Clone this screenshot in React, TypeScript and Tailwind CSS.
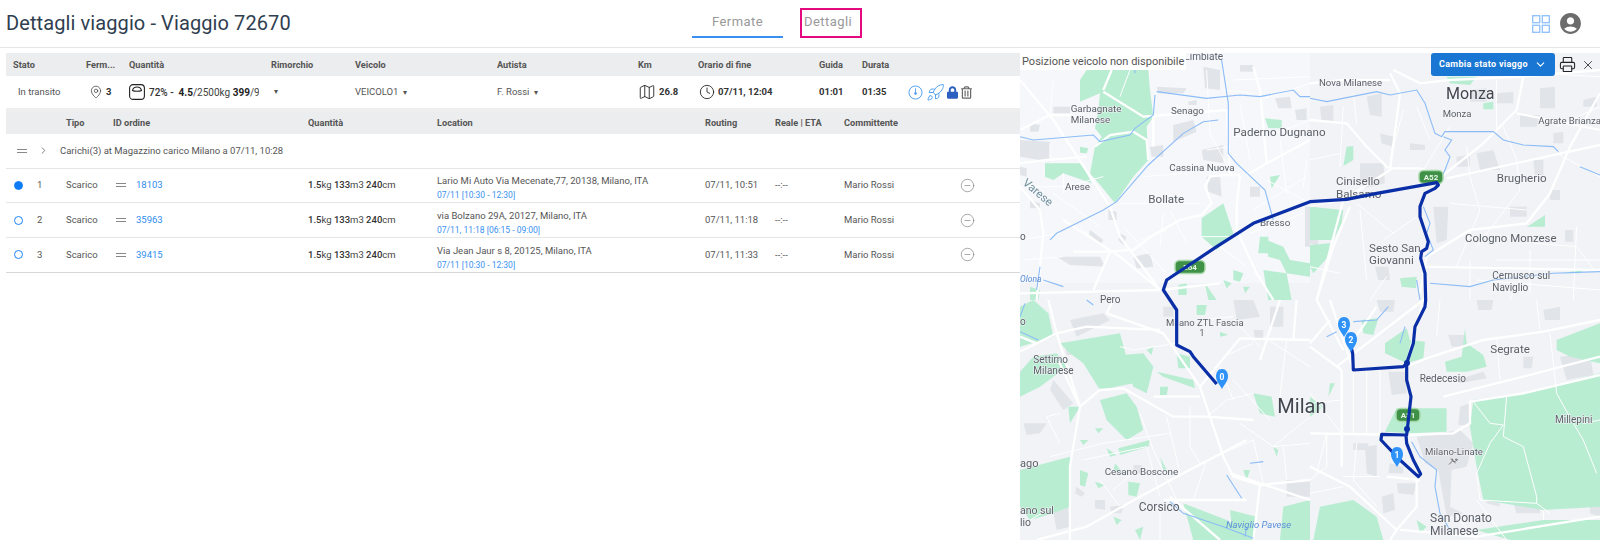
import React from "react";
import { MapPin, Map as MapIcon, Clock, Rocket, CircleMinus, Printer, X, ChevronDown, ChevronRight } from "lucide-react";
import { FaLock, FaRegTrashAlt } from "react-icons/fa";
import { MdAccountCircle } from "react-icons/md";

type Quad = { x: number; y: number; greens: string[]; blocks: string[]; major: string[]; minor: string[]; water: string[]; labels: [string, number, number, number][] };

const quads: Quad[] = [
  {
    x: 1020, y: 60,
    greens: [
      "180,60 200,30 385,30 390,90 400,170 380,200 385,300 340,350 285,430 245,380 210,340 225,260 245,230 225,205 235,150 240,100 180,125",
      "75,310 180,310 200,340 215,370 130,340 100,360 75,350", "545,475 610,430 640,520 590,570 545,530", "735,175 785,180 785,205 745,205",
      "720,530 745,530 745,580 715,580", "740,540 790,560 810,600 870,610 870,650 800,640 780,600 745,590", "730,630 800,640 815,720 745,720",
      "640,630 670,640 660,665 640,660", "475,675 500,670 500,705 475,705", "610,660 635,670 620,685", "670,680 690,680 675,700", "555,670 590,720 565,720",
      "180,260 205,265 200,280 180,278", "30,680 60,690 55,720 30,720", "750,350 780,345 755,385",
    ],
    blocks: [
      "0,240 90,245 90,305 0,290", "550,20 600,30 600,90 555,85", "765,115 810,110 815,145 775,145", "545,270 610,255 610,310 550,300", "460,195 520,180 530,215 460,245",
      "560,350 600,345 605,410 565,395", "390,260 430,255 430,290 395,290", "100,140 150,140 150,160 100,160", "825,150 860,145 860,180 830,180", "855,440 870,440 870,560 855,560",
      "110,590 240,590 255,620 150,615", "210,510 250,540 240,555 205,530", "300,520 320,530 310,555 295,540", "0,320 20,325 20,350 0,345", "265,450 290,455 290,480 265,480",
      "410,80 500,85 490,100 415,100", "505,125 530,120 530,135 505,135", "30,190 60,195 55,215 30,215", "30,420 60,430 60,445 30,445", "270,345 290,345 290,365 270,365", "290,180 315,180 315,200 290,200",
      "660,15 700,15 700,35 660,35", "690,380 720,380 720,410 690,410", "340,590 390,580 400,620 350,625",
    ],
    major: [
      "0,60 100,180 270,440 300,530 420,690", "60,450 70,520 50,720", "0,310 80,300 200,290", "0,210 90,165 160,165", "250,95 370,170 620,150", "400,170 400,260", "250,90 275,30",
      "225,260 270,225 340,215 380,240 385,300", "680,345 740,310 870,240", "660,345 610,345 570,350 555,380 575,430 545,465 480,480 400,525 340,570 260,575 160,575",
      "660,345 650,440 650,510 710,640 760,720", "700,20 720,90 740,310", "620,150 630,345", "0,700 420,690 600,670", "270,575 220,690", "130,480 300,590 420,690", "60,450 0,380",
    ],
    minor: [
      "0,380 140,380 250,350", "90,250 90,300", "130,340 130,400", "300,430 540,430", "370,350 500,340", "430,460 420,560", "560,30 570,220 640,350", "720,120 870,70", "640,60 870,50", "610,90 700,100",
      "770,220 870,180", "740,360 870,430", "860,300 850,380", "700,450 860,350", "330,30 300,110", "100,60 90,160", "690,520 850,460", "540,530 640,530", "310,500 440,640", "180,500 260,570",
      "450,450 500,550", "600,560 680,620", "360,540 440,510", "560,270 630,260", "100,400 240,500", "0,540 120,520", "10,600 130,590", "640,230 740,220", "660,130 690,300", "780,240 800,400",
    ],
    water: [
      "410,95 560,115 660,105 720,110 820,90 840,110 870,110", "0,230 40,240 220,225 240,245 330,225 345,205 400,165 405,105", "90,540 110,520 250,450 290,425 385,315 490,220 550,185 595,180",
      "605,0 625,130 625,280 650,310 735,390 760,480", "60,620 50,690", "70,660 130,680", "345,30 345,40",
    ],
    labels: [
      ["Garbagnate", 152, 155, 9.8], ["Milanese", 152, 190, 9.8], ["Senago", 453, 163, 9.8], ["Paderno Dugnano", 640, 228, 11.6], ["Cassina Nuova", 448, 332, 9.8],
      ["Arese", 135, 389, 9.8], ["Bollate", 385, 430, 11.6], ["Bresso", 720, 497, 9.8], ["o", 0, 540, 10],
    ],
  },
  {
    x: 1310, y: 60,
    greens: [
      "410,50 500,50 480,75 420,70", "520,130 550,125 550,148 520,148", "110,260 130,258 130,300 100,318", "0,440 100,450 95,490 70,540 0,540", "0,555 60,550 55,590 10,640 0,620",
      "270,655 320,650 318,685 275,680", "660,495 705,465 705,500 650,500", "760,640 830,625 810,640",
    ],
    blocks: [
      "690,85 735,80 735,145 690,145", "630,165 690,165 680,200 630,200", "170,110 215,100 215,170 180,165", "30,140 70,135 70,185 35,185", "150,310 220,310 225,370 160,385 150,360",
      "0,440 20,440 25,560 0,550", "500,280 550,270 570,330 510,330", "370,440 415,440 410,540 380,550", "440,290 480,285 480,320 440,320", "670,300 700,300 700,345 675,345", "720,390 750,390 750,420 720,420",
      "765,510 790,510 790,545 765,545", "195,620 235,620 240,660 205,660", "210,220 250,230 250,260 215,250", "600,440 650,440 650,470 600,470", "820,120 860,110 860,140 820,140", "300,250 345,255 345,270 300,270",
      "730,220 760,215 760,250 730,250", "560,100 610,95 610,130 560,130", "480,90 530,85 530,125 480,125",
    ],
    major: [
      "410,355 870,255", "240,40 270,100 240,330 100,420 20,720", "240,325 330,325 400,345", "400,345 520,250 620,150 640,50", "620,160 870,210", "250,30 330,70 420,60 630,50 870,30", "0,180 110,190 170,260 235,325",
      "0,70 100,60 240,60", "870,100 780,260 720,400 650,490 480,510 350,590 330,700", "120,440 70,560 20,720", "330,620 870,630",
    ],
    minor: [
      "420,200 340,330", "470,260 480,350 510,450 440,620", "580,200 620,300 630,390 500,560", "0,440 110,420", "140,430 250,520", "420,430 650,450", "220,540 320,470", "670,550 800,560 860,640", "480,600 480,720",
      "100,140 90,320", "680,40 870,50", "740,280 870,350", "800,500 790,720", "230,650 180,720", "870,140 740,200", "560,600 870,600", "600,720 640,640", "280,150 240,300", "560,60 560,210", "0,300 90,280", "130,100 140,190",
      "320,140 360,240", "660,570 660,700", "500,660 870,690", "0,620 90,640", "150,450 170,660",
    ],
    water: [
      "0,115 50,125 200,95 240,105 320,90 345,130 375,220 395,230 405,215 550,215 580,240 640,255 730,260 745,275", "400,230 425,240 405,270 420,290 405,330 395,350", "810,320 870,345",
      "340,440 360,490 350,520 370,570 345,590", "360,670 480,680 550,660 730,640 870,635", "320,660 330,720",
    ],
    labels: [
      ["Nova Milanese", 27, 78, 9.6], ["Monza", 408, 118, 16], ["Monza", 398, 172, 9.5], ["Agrate Brianza", 685, 192, 9.6], ["Cinisello", 78, 375, 11.6], ["Balsamo", 78, 413, 11.6], ["Brugherio", 560, 367, 11.6],
      ["Cologno Monzese", 465, 545, 11.4], ["Sesto San", 177, 575, 11.6], ["Giovanni", 177, 612, 11.6], ["Cernusco sul", 547, 657, 10], ["Naviglio", 547, 692, 10],
    ],
  },
  {
    x: 1020, y: 300,
    greens: [
      "0,20 40,0 85,40 100,110 0,140", "120,130 300,100 340,250 240,270 190,190 150,160", "305,165 370,160 400,200 380,280 340,260", "410,215 520,240 525,265 430,230", "470,160 510,170 510,205 475,205", "530,15 560,15 555,45 530,45",
      "240,300 320,280 350,320 370,390 320,420 260,360", "0,215 40,170 110,160 140,200 60,260 0,290", "145,320 180,320 150,370", "0,510 150,470 150,620 100,640 30,660 0,620", "180,510 205,520 195,560 180,555",
      "225,545 255,555 235,565", "295,445 390,420 385,440 300,465", "260,445 290,465 270,470", "420,470 445,520 430,510", "325,545 360,550 350,590 325,585", "285,490 310,520 280,515", "490,610 620,660 700,720 520,720",
      "790,620 870,600 870,720 780,720", "700,280 755,290 765,350 720,340", "630,630 710,650 700,720 640,720", "380,150 400,140 395,165", "420,260 445,260 440,285 420,285", "345,690 370,680 360,720", "280,650 305,660 290,675",
      "670,510 690,510 680,540", "760,440 775,450 770,470", "600,95 625,105 600,110", "225,385 250,385 235,400", "180,420 205,420 190,435",
    ],
    blocks: [
      "10,370 80,370 60,400 20,405", "150,60 250,40 270,60 170,110", "135,140 180,150 180,165 140,165", "100,240 160,310 130,330 90,270", "640,0 700,0 720,50 650,60", "700,90 730,90 730,115 705,115", "800,540 870,540 870,590 800,590",
      "430,20 460,20 460,50 430,50", "170,560 195,580 185,590 165,580", "225,600 255,600 255,630 225,625", "0,560 25,590 20,620 0,610", "100,640 145,620 150,680 110,690", "340,495 365,495 365,520 340,520", "270,620 310,615 305,640 275,640",
      "840,610 870,620 870,650 840,655", "750,20 790,20 790,80 750,80",
    ],
    major: [
      "0,155 110,100 200,80 420,90", "85,0 110,100 180,320 150,500 150,720", "110,170 180,320", "180,320 240,270 310,265 460,350 560,350 700,360", "260,40 430,100 540,260 610,470 640,530 720,555 870,540", "540,260 660,115 870,120", "0,110 50,130",
      "280,0 260,40", "50,720 200,680 360,590 490,520 680,420", "400,290 540,290", "630,520 870,600", "720,555 700,720", "430,600 680,600", "450,590 600,720", "780,0 720,180", "830,0 820,120",
    ],
    minor: [
      "300,140 340,150 470,130", "120,340 80,350 120,430", "360,340 400,450 480,620", "440,350 480,520", "510,320 510,440 540,490", "560,350 620,300 700,280", "660,370 760,440 870,350", "700,420 730,550", "790,440 800,540", "250,430 450,400",
      "190,480 380,440 420,590", "90,470 250,430", "540,490 700,420", "280,570 340,520", "30,660 100,620", "560,480 520,600", "640,240 750,360", "730,110 870,200", "800,120 780,290", "420,620 420,720", "870,430 760,440", "240,540 300,620", "610,170 700,130",
      "600,200 640,300", "540,60 640,50", "640,60 720,140",
    ],
    water: ["620,525 665,595", "450,605 490,640 610,680 700,715", "690,490 730,485", "0,95 55,120", "15,10 0,50", "200,0 220,15", "680,680 675,710"],
    labels: [
      ["Pero", 240, 8, 10], ["Milano ZTL Fascia", 438, 78, 9.5], ["1", 538, 108, 9.5], ["Settimo", 40, 190, 10], ["Milanese", 40, 222, 10], ["ago", 0, 500, 11], ["Cesano Boscone", 254, 526, 9.8], ["Corsico", 356, 634, 12],
      ["ano sul", 0, 643, 10.5], ["lio", 0, 677, 10.5], ["Milan", 772, 338, 20], ["o", 0, 75, 10],
    ],
  },
  {
    x: 1310, y: 300,
    greens: [
      "155,60 205,55 190,105 160,100", "225,130 290,85 300,120 345,125 340,175 290,190 225,160", "405,185 455,170 465,85 470,130 520,165 530,200 470,215 410,215", "260,325 410,325 410,395 300,400 225,395",
      "490,300 640,280 870,220 870,620 700,630 520,600 500,500 480,380", "740,120 870,70 870,190 780,170 740,150", "30,620 130,600 200,650 220,720 10,720", "500,690 700,660 870,660 870,720 600,720", "320,660 350,680 330,700", "60,250 75,250 55,290",
      "0,290 40,320 0,350",
    ],
    blocks: [
      "320,410 450,390 490,430 470,500 425,510 420,620 460,640 410,650 385,510 345,490", "415,105 465,105 460,140 425,140", "235,215 285,215 290,280 245,285", "500,0 550,0 545,30 505,30", "200,0 255,0 250,35 210,35", "750,170 840,160 850,225 770,240",
      "640,170 670,170 665,205 640,205", "165,440 200,435 200,530 170,520", "130,430 175,430 175,450 130,450", "240,490 280,500 280,520 235,520", "215,590 250,580 255,630 220,640", "260,550 320,550 310,585 265,580", "450,320 480,310 480,375 445,375",
      "700,30 750,20 750,60 705,60", "440,240 520,215 530,235 450,250", "610,380 650,375 680,440 650,460 620,420", "640,310 670,310 660,340 645,345", "815,440 845,440 845,470 825,475", "840,590 870,580 870,650 840,640", "530,510 560,520 570,620 530,610", "610,610 690,605 690,640 620,640",
    ],
    major: [
      "130,210 290,200 350,175 520,120 700,95 870,60", "95,210 95,500", "0,400 290,405 430,400 480,370 480,305 640,280 870,225", "400,290 640,230 870,170", "320,530 320,620 260,690 240,720", "0,140 95,210", "0,500 120,560 260,690",
      "340,0 290,190", "0,130 60,60", "340,0 80,200", "20,0 100,150", "230,530 330,540", "270,690 500,710 870,650", "60,0 80,60 130,210", "200,20 130,120",
    ],
    minor: [
      "540,370 580,375 540,430 500,520 510,600 680,610 720,640", "580,410 640,440 680,590 680,610", "740,280 790,370 820,420 860,520", "490,305 540,370", "590,290 580,410", "820,370 870,360", "130,210 130,400", "170,210 170,400", "210,210 210,400",
      "95,300 0,310", "95,400 0,280", "50,400 20,520", "50,400 50,500 0,540", "140,430 130,540 200,620", "100,530 210,530", "0,580 100,560", "700,630 700,660", "390,0 380,110", "560,110 570,240", "720,100 740,280", "500,600 590,720", "440,650 500,720", "680,0 690,90",
    ],
    water: ["305,425 330,470 380,510 375,560 390,640 420,690", "50,110 80,95", "130,65 200,60 235,20", "270,130 285,80"],
    labels: [["Segrate", 541, 160, 11.6], ["Redecesio", 329, 247, 10], ["Milano-Linate", 345, 465, 9.6], ["Millepini", 735, 370, 10], ["San Donato", 360, 667, 12], ["Milanese", 360, 705, 12]],
  },
];

const conv = (ox: number, oy: number, pts: string) =>
  pts.split(" ").map((p) => {
    const [a, b] = p.split(",").map(Number);
    return `${ox + a / 3},${oy + b / 3}`;
  }).join(" ");

const route1 = [
  conv(1020, 300, "590,252 520,170 510,155 470,135 470,30 450,0"),
  conv(1020, 60, "430,690 440,660 590,560 700,490 870,425"),
  conv(1310, 60, "0,425 110,418 200,400 380,368 385,375 375,385 345,400 330,440 330,470 355,545 350,565 335,575 332,595 345,640 347,720"),
  conv(1310, 300, "345,20 315,80 310,130 290,190 280,200 130,210 128,160 123,140"),
].join(" ");
const route2 = conv(1310, 300, "290,190 290,240 303,290 295,360 290,405 215,403 213,420 270,480 325,530 332,522 310,480 290,430 288,405");

function Pin({ x, y, n }: { x: number; y: number; n: string }) {
  return (
    <g transform={`translate(${x - 6} ${y - 20})`}>
      <path d="M6 0C10 0 12 3.500 12 7.500 12 12 8 16 6 20 4 16 0 12 0 7.500 0 3.500 2 0 6 0z" fill="#2f92f8" />
      <text x="6" y="10.500" textAnchor="middle" fontSize="8.500" fontWeight="700" fill="#fff">{n}</text>
    </g>
  );
}

function Shield({ x, y, t, w = 24 }: { x: number; y: number; t: string; w?: number }) {
  return (
    <g transform={`translate(${x} ${y})`}>
      <rect x={-w / 2} y="-6.500" width={w} height="13" rx="4.500" fill="#3f9148" stroke="#a9d8aa" strokeWidth="1.500" />
      <text y="3" textAnchor="middle" fontSize="8" fontWeight="700" fill="#e8f5e8">{t}</text>
    </g>
  );
}

function MilanMap() {
  return (
    <svg viewBox="1020 53 580 487" className="block h-[487px] w-[580px] blur-[0.35px]">
      <rect x="1020" y="53" width="580" height="487" fill="#f1f3f6" />
      <rect x="1020" y="53" width="290" height="230" fill="#f5f7fb" />
      {quads.map((q, i) => (
        <g key={i} transform={`translate(${q.x} ${q.y}) scale(.3333)`}>
          {q.blocks.map((p, k) => <polygon key={k} points={p} fill="#e1e4e9" />)}
          {q.greens.map((p, k) => <polygon key={k} points={p} fill="#b8edd2" />)}
          {q.minor.map((p, k) => <polyline key={k} points={p} fill="none" stroke="#fff" strokeWidth="1" vectorEffect="non-scaling-stroke" />)}
          {q.major.map((p, k) => <polyline key={k} points={p} fill="none" stroke="#fff" strokeWidth="2.300" vectorEffect="non-scaling-stroke" />)}
          {q.water.map((p, k) => <polyline key={k} points={p} fill="none" stroke="#8cbcf7" strokeWidth="1.100" vectorEffect="non-scaling-stroke" />)}
        </g>
      ))}
      <text x="1223" y="60" textAnchor="end" fontSize="10" fill="#5a5f68">Limbiate</text>
      {quads.map((q, i) =>
        q.labels.map(([t, x, y, s], k) => (
          <text key={`${i}-${k}`} x={q.x + x / 3} y={q.y + y / 3} fontSize={s} fill={s > 15 ? "#41464f" : "#5a5f68"} stroke="#f5f6f8" strokeWidth="1" paintOrder="stroke">{t}</text>
        ))
      )}
      <text transform="translate(1022 184) rotate(40)" fontSize="11.500" fill="#74929d">Varese</text>
      <text x="1020" y="282" fontSize="8.500" fontStyle="italic" fill="#5b8fd8">Olona</text>
      <text x="1226" y="528" fontSize="9.500" fontStyle="italic" fill="#5b8fd8">Naviglio Pavese</text>
      <Shield x={1190} y={267} t="E64" w={30} />
      <Shield x={1431} y={177} t="A52" />
      <Shield x={1408} y={415} t="A51" />
      <g fill="none" stroke="#0a2ea6" strokeLinejoin="round" strokeWidth="3.200">
        <polyline points={route1} />
        <polyline points={route2} />
      </g>
      <circle cx="1407" cy="363" r="3" fill="#0a2ea6" />
      <circle cx="1407" cy="429" r="3" fill="#0a2ea6" />
      <path d="M1452 458.500l2 3.500 3.500-2-.5-1-2 .5m-2.500 1.500l-3.500 3.500m1.500-5.500l5 4" stroke="#777" strokeWidth="1" fill="none" />
      <Pin x={1344} y={337} n="3" />
      <Pin x={1351} y={352} n="2" />
      <Pin x={1222} y={389} n="0" />
      <Pin x={1397} y={467} n="1" />
    </svg>
  );
}

function ScaleIcon() {
  return (
    <svg viewBox="0 0 16 16" className="h-[16px] w-[16px] shrink-0" fill="none" stroke="#222" strokeWidth="1.100">
      <rect x=".6" y=".6" width="14.800" height="14.800" rx="3.500" />
      <path d="M3.500 6.500C4 3.800 6 3 8 3s4 .8 4.500 3.500c-1 .6-2.500.8-4.500.8s-3.500-.2-4.500-.8z" />
    </svg>
  );
}

function TimerIcon() {
  return (
    <svg viewBox="0 0 16 16" className="h-[15px] w-[15px]" fill="none" stroke="#4a9df2" strokeWidth="1">
      <circle cx="8" cy="8" r="7" />
      <path d="M8 3.500V8" />
      <circle cx="8" cy="9" r="1" fill="#4a9df2" />
    </svg>
  );
}

function Handle() {
  return (
    <span className="flex w-[10px] flex-col gap-[2px]">
      <span className="h-px bg-[#888]" />
      <span className="h-px bg-[#888]" />
    </span>
  );
}

function GridIcon() {
  return (
    <svg viewBox="0 0 18 18" className="h-[18px] w-[18px]" fill="none" stroke="#8fc1fb" strokeWidth="1.300">
      <rect x=".7" y=".7" width="7" height="7" />
      <rect x="10.300" y=".7" width="7" height="7" />
      <rect x=".7" y="10.300" width="7" height="7" />
      <rect x="10.300" y="10.300" width="7" height="7" />
    </svg>
  );
}

const stops = [
  { n: "1", on: true, id: "18103", a: "Lario Mi Auto Via Mecenate,77, 20138, Milano, ITA", w: "07/11 [10:30 - 12:30]", r: "07/11, 10:51" },
  { n: "2", on: false, id: "35963", a: "via Bolzano 29A, 20127, Milano, ITA", w: "07/11, 11:18 [06:15 - 09:00]", r: "07/11, 11:18" },
  { n: "3", on: false, id: "39415", a: "Via Jean Jaur s 8, 20125, Milano, ITA", w: "07/11 [10:30 - 12:30]", r: "07/11, 11:33" },
];

const cols = "grid grid-cols-[31px_29px_47px_23px_172px_129px_268px_70px_69px_116px_60px] items-center";

export default function App() {
  return (
    <div className="h-[540px] w-[1600px] overflow-hidden bg-white font-['Roboto',sans-serif] text-[9.500px] text-[#555]">
      <header className="flex h-[48px] items-center border-b border-[#e6e6e6] pl-[6px]">
        <h1 className="w-[686px] pb-[1px] text-[20px] font-normal leading-none tracking-[.1px] text-[#2f3e50]">Dettagli viaggio - Viaggio 72670</h1>
        <nav className="flex h-[48px] items-start text-[13px] tracking-[.45px] text-[#999]">
          <div className="flex h-[38px] w-[91px] items-start justify-center border-b-2 border-[#3b8ff0] pt-[14px] leading-[16px]">Fermate</div>
          <div className="ml-[17px] mt-[8px] h-[30px] w-[62px] border-2 border-[#e5097f] pl-[2px] pt-[4px] leading-[16px]">Dettagli</div>
        </nav>
        <div className="ml-auto flex items-center gap-[8px] pr-[17px]">
          <GridIcon />
          <MdAccountCircle className="h-[25px] w-[25px] text-[#6c6c6c]" />
        </div>
      </header>

      <main className="flex h-[492px] pt-[5px]">
        <section className="w-[1020px] shrink-0 pl-[6px]">
          <div className="grid h-[23px] grid-cols-[73px_43px_142px_84px_142px_141px_60px_121px_43px_46px_1fr] items-center bg-[#ecedef] pl-[7px] text-[9.200px] font-bold text-[#555]">
            <span>Stato</span><span>Ferm...</span><span>Quantità</span><span>Rimorchio</span><span>Veicolo</span><span>Autista</span><span>Km</span><span>Orario di fine</span><span>Guida</span><span>Durata</span><span />
          </div>
          <div className="grid h-[36px] grid-cols-[73px_43px_142px_84px_142px_141px_60px_121px_43px_46px_1fr] items-center border-b-[4px] border-[#eeeeef] pl-[7px] text-[9.500px]">
            <span className="pl-[5px]">In transito</span>
            <span className="flex items-center gap-[3px] pl-[3px] font-bold text-[#333]"><MapPin className="h-[14px] w-[14px] text-[#333]" strokeWidth={1.2} />3</span>
            <span className="flex w-[130px] items-center gap-[4px] overflow-hidden whitespace-nowrap text-[10px] text-[#444]">
              <ScaleIcon /><span><b className="font-medium text-[#333]">72% - </b>&nbsp;<b className="font-bold text-[#222]">4.5</b>/2500kg <b className="font-bold text-[#222]">399</b>/900</span>
            </span>
            <span className="pl-[3px] text-[8px]">▾</span>
            <span>VEICOLO1 <span className="ml-[2px] text-[8px]">▾</span></span>
            <span>F. Rossi <span className="ml-[2px] text-[8px]">▾</span></span>
            <span className="flex items-center gap-[3px] font-bold text-[#333]"><MapIcon className="h-[18px] w-[18px] text-[#222]" strokeWidth={1.2} />26.8</span>
            <span className="flex items-center gap-[3px] pl-[1px] font-bold text-[#333]"><Clock className="h-[16px] w-[16px] text-[#222]" strokeWidth={1.3} />07/11, 12:04</span>
            <span className="font-bold text-[#333]">01:01</span>
            <span className="font-bold text-[#333]">01:35</span>
            <span className="flex items-center gap-[3px]">
              <TimerIcon />
              <Rocket className="h-[19px] w-[19px] text-[#4a9df2]" strokeWidth={1.2} />
              <FaLock className="-ml-[1px] h-[13px] w-[11px] text-[#2b5fc0]" />
              <FaRegTrashAlt className="h-[13px] w-[11px] text-[#666]" />
            </span>
          </div>
          <div className={`${cols} h-[22px] bg-[#ecedef] text-[9.200px] font-bold`}>
            <span /><span />
            <span>Tipo</span>
            <span className="col-span-2">ID ordine</span>
            <span>Quantità</span><span>Location</span><span>Routing</span><span>Reale | ETA</span><span>Committente</span><span />
          </div>
          <div className="flex h-[34.500px] items-center border-b border-[#e6e6e6] pl-[11px] text-[9.500px]">
            <Handle />
            <ChevronRight className="ml-[11px] h-[11px] w-[11px] text-[#555]" strokeWidth={1.6} />
            <span className="ml-[11px]">Carichi(3) at Magazzino carico Milano a 07/11, 10:28</span>
          </div>
          {stops.map((s, i) => (
            <div key={s.id} className={`${cols} h-[34.700px] border-b ${i === 2 ? "border-[#d8d8d8]" : "border-[#e6e6e6]"} text-[9.500px]`}>
              <span className="pl-[8px]">
                <span className={`block h-[9px] w-[9px] rounded-full border-[1.5px] border-[#1a84f7] ${s.on ? "bg-[#0d7bf5]" : "bg-white"}`} />
              </span>
              <span>{s.n}</span>
              <span>Scarico</span>
              <span className="pl-[3px]"><Handle /></span>
              <span className="text-[#2f8df0]">{s.id}</span>
              <span className="whitespace-nowrap text-[#444]"><b className="font-medium text-[#333]">1.5</b>kg <b className="font-medium text-[#333]">133</b>m3 <b className="font-medium text-[#333]">240</b>cm</span>
              <div className="flex flex-col gap-[3px] whitespace-nowrap pt-[5px] text-[9.500px] leading-[13px]">
                <span>{s.a}</span>
                <span className="text-[8.500px] leading-[11px] text-[#3a92f0]">{s.w}</span>
              </div>
              <span>{s.r}</span>
              <span>--:--</span>
              <span>Mario Rossi</span>
              <span><CircleMinus className="h-[15px] w-[15px] text-[#777]" strokeWidth={1} /></span>
            </div>
          ))}
        </section>

        <section className="relative h-[487px] w-[580px] overflow-hidden">
          <MilanMap />
          <div className="absolute left-0 top-0 flex h-[17px] w-[166px] items-center bg-white pl-[2px] text-[11px] leading-none text-[#555]">Posizione veicolo non disponibile</div>
          <div className="absolute right-[5px] top-0 flex h-[23px] items-center">
            <button className="flex h-[23px] w-[124px] items-center justify-between rounded-[3px] bg-[#1976d2] pl-[8px] pr-[8px] text-[9px] font-bold tracking-[.32px] text-white">
              Cambia stato viaggo
              <ChevronDown className="h-[13px] w-[13px]" strokeWidth={2} />
            </button>
            <Printer className="ml-[4px] h-[17px] w-[17px] text-[#222]" strokeWidth={1.5} />
            <X className="ml-[5px] h-[14px] w-[14px] text-[#333]" strokeWidth={1.5} />
          </div>
        </section>
      </main>
    </div>
  );
}
